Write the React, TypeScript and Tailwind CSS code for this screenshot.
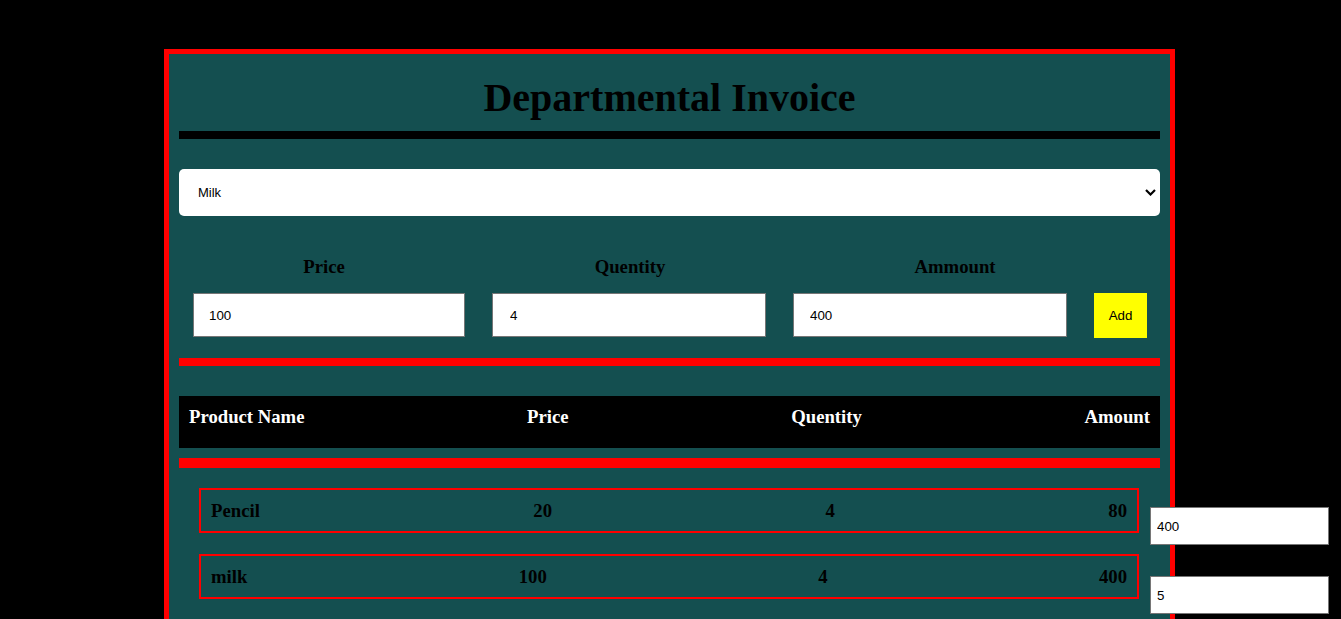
import { useState } from "react";

interface Item {
  name: string;
  price: number;
  qty: number;
  amount: number;
  side: string;
}

const items: Item[] = [
  { name: "Pencil", price: 20, qty: 4, amount: 80, side: "400" },
  { name: "milk", price: 100, qty: 4, amount: 400, side: "5" },
];

const serif = "font-['Liberation_Serif','Times_New_Roman',serif]";
const sans = "font-['Liberation_Sans',Arial,sans-serif]";

export default function App() {
  const [product, setProduct] = useState("Milk");
  const [price, setPrice] = useState("100");
  const [qty, setQty] = useState("4");
  const [amount, setAmount] = useState("400");

  return (
    <div className="min-h-screen bg-black pt-[49px] overflow-hidden">
      <div className="ml-[164px] w-[1011px] border-[5px] border-[#ff0000] bg-[#144f50] p-[10px] pb-[40px]">
        <h1 className={`${serif} mt-[11px] mb-[10px] text-center text-[40px] leading-[46px] font-bold text-black`}>
          Departmental Invoice
        </h1>
        <div className="h-2 bg-black" />

        <div className="relative mt-[30px]">
          <select
            value={product}
            onChange={(e) => setProduct(e.target.value)}
            className={`${sans} h-[47px] w-full appearance-none rounded-[5px] bg-white pl-[19px] text-[13px] text-black outline-none`}
          >
            <option value="Milk">Milk</option>
            <option value="Pencil">Pencil</option>
          </select>
          <svg className="pointer-events-none absolute right-[4px] top-[20px]" width="11" height="7" viewBox="0 0 11 7">
            <path d="M1 1l4.5 4.5L10 1" fill="none" stroke="#000" strokeWidth="2.2" />
          </svg>
        </div>

        <div className={`${serif} mt-[40px] flex text-[18.72px] leading-[21.5px] font-bold text-black`}>
          <div className="w-[290px] text-center">Price</div>
          <div className="w-[322px] text-center">Quentity</div>
          <div className="w-[328px] text-center">Ammount</div>
        </div>

        <div className={`${sans} mt-[15.5px] flex items-start pl-[14px] text-[13.33px]`}>
          <input
            value={price}
            onChange={(e) => setPrice(e.target.value)}
            className="h-[44px] w-[272px] border border-[#767676] bg-white pl-[15px] text-black outline-none"
          />
          <input
            value={qty}
            onChange={(e) => setQty(e.target.value)}
            className="ml-[27px] h-[44px] w-[274px] border border-[#767676] bg-white pl-[17px] text-black outline-none"
          />
          <input
            value={amount}
            onChange={(e) => setAmount(e.target.value)}
            className="ml-[27px] h-[44px] w-[274px] border border-[#767676] bg-white pl-[16px] text-black outline-none"
          />
          <button className="ml-[27px] h-[45px] w-[53px] bg-[#ffff00] text-black">Add</button>
        </div>

        <div className="mt-[20px] h-2 bg-[#ff0000]" />

        <div
          className={`${serif} mt-[30px] flex h-[52px] justify-between bg-black px-[10px] pt-[10px] text-[18.72px] leading-[21.5px] font-bold text-white`}
        >
          <span>Product Name</span>
          <span>Price</span>
          <span>Quentity</span>
          <span>Amount</span>
        </div>

        <div className="mt-[10px] h-[10px] bg-[#ff0000]" />

        <div className="mt-[20px] flex flex-col gap-[21px]">
          {items.map((it, i) => (
            <div key={it.name} className="mx-5 flex h-[45px] items-start">
              <div
                className={`${serif} flex h-[45px] w-[940px] shrink-0 justify-between border-2 border-[#ff0000] px-[10px] pt-[10px] text-[18.72px] leading-[21.5px] font-bold text-black`}
              >
                <span>{it.name}</span>
                <span>{it.price}</span>
                <span>{it.qty}</span>
                <span>{it.amount}</span>
              </div>
              <input
                defaultValue={it.side}
                className={`${sans} relative ml-[11px] h-[38px] w-[179px] shrink-0 border border-[#767676] bg-white pl-[6px] text-[13.33px] text-black outline-none ${
                  i === 0 ? "mt-[19px]" : "mt-[22px]"
                }`}
              />
            </div>
          ))}
        </div>
      </div>
    </div>
  );
}
